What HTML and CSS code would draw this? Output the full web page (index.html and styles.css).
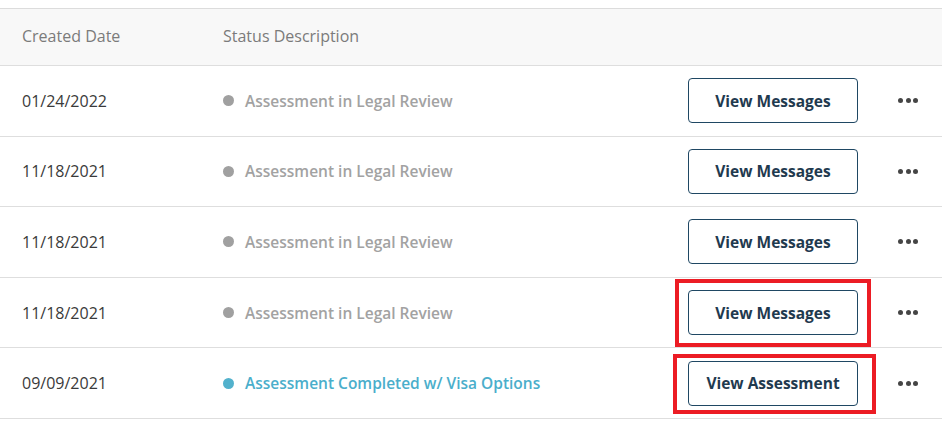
FILE: index.html
```html
<!DOCTYPE html>
<html>
<head>
<meta charset="utf-8">
<link rel="stylesheet" href="styles.css">
</head>
<body>
<div class="table">
  <div class="head">
    <div class="c-date">Created Date</div>
    <div class="c-status">Status Description</div>
  </div>
  <div class="row">
    <div class="c-date">01/24/2022</div>
    <div class="c-status"><span class="dot"></span>Assessment in Legal Review</div>
    <div class="c-btn"><button class="btn">View Messages</button></div>
    <div class="c-more"><span class="more"><i></i><i></i><i></i></span></div>
  </div>
  <div class="row">
    <div class="c-date">11/18/2021</div>
    <div class="c-status"><span class="dot"></span>Assessment in Legal Review</div>
    <div class="c-btn"><button class="btn">View Messages</button></div>
    <div class="c-more"><span class="more"><i></i><i></i><i></i></span></div>
  </div>
  <div class="row">
    <div class="c-date">11/18/2021</div>
    <div class="c-status"><span class="dot"></span>Assessment in Legal Review</div>
    <div class="c-btn"><button class="btn">View Messages</button></div>
    <div class="c-more"><span class="more"><i></i><i></i><i></i></span></div>
  </div>
  <div class="row">
    <div class="c-date">11/18/2021</div>
    <div class="c-status"><span class="dot"></span>Assessment in Legal Review</div>
    <div class="c-btn"><span class="hl hl1"></span><button class="btn">View Messages</button></div>
    <div class="c-more"><span class="more"><i></i><i></i><i></i></span></div>
  </div>
  <div class="row">
    <div class="c-date">09/09/2021</div>
    <div class="c-status done"><span class="dot"></span>Assessment Completed w/ Visa Options</div>
    <div class="c-btn"><span class="hl hl2"></span><button class="btn">View Assessment</button></div>
    <div class="c-more"><span class="more"><i></i><i></i><i></i></span></div>
  </div>
</div>
</body>
</html>
```

FILE: styles.css
```css
html, body {
  margin: 0;
  padding: 0;
  background: #fff;
}
body {
  font-family: "Open Sans", "Lato", sans-serif;
  padding-top: 8px;
}
.table {
  border-top: 1px solid #dcdcdc;
}
.head, .row {
  display: grid;
  grid-template-columns: 200px 1fr 210px 44px;
  align-items: center;
  border-bottom: 1px solid #dedede;
  box-sizing: border-box;
}
.head {
  height: 57px;
  background: #f8f8f8;
  font-size: 16px;
  padding-bottom: 2px;
}
.row {
  height: 70.6px;
  font-size: 16px;
}
.c-date {
  padding-left: 22px;
  color: #3a3a3a;
}
.head .c-date, .head .c-status { color: #7b7b7b; }
.c-status {
  padding-left: 23px;
  display: flex;
  align-items: center;
}
.row .c-status {
  font-weight: 600;
  font-size: 15.5px;
  color: #a2a2a2;
}
.row .c-status.done { color: #4aaecb; }
.dot {
  width: 11px;
  height: 11px;
  border-radius: 50%;
  background: #a0a0a0;
  margin-right: 11px;
  flex: none;
}
.done .dot { background: #52b1cc; }
.c-btn {
  position: relative;
  display: flex;
  align-items: center;
}
.btn {
  width: 170px;
  height: 45px;
  border: 1px solid #1f4763;
  border-radius: 4px;
  background: #fff;
  font-family: "Open Sans", sans-serif;
  font-weight: 700;
  font-size: 15.5px;
  color: #1f3a4f;
  cursor: pointer;
  margin: 0;
  padding: 0;
}
.hl {
  position: absolute;
  border: 4px solid #ec1c24;
  box-sizing: border-box;
  pointer-events: none;
}
.hl1 { left: -13px; top: -11px; width: 196px; height: 68px; }
.hl2 { left: -15px; top: -7px; width: 203px; height: 60px; }
.c-more {
  display: flex;
}
.more {
  display: flex;
  gap: 2.5px;
}
.more i {
  width: 5px;
  height: 5px;
  border-radius: 50%;
  background: #454545;
}
```
